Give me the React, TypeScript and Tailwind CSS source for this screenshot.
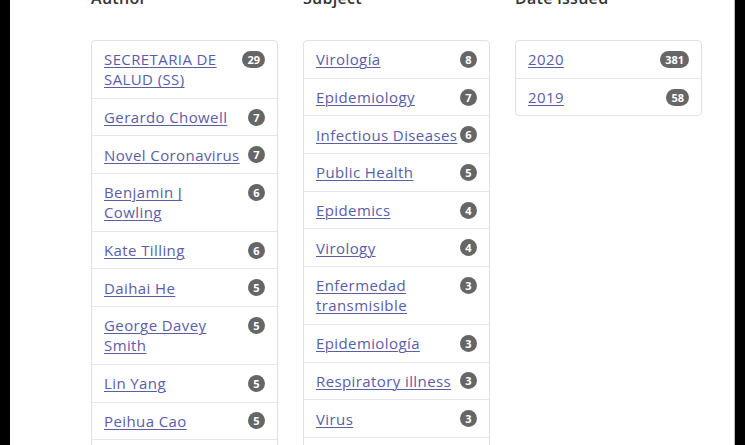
type Facet = { label: string; count: number }

// Montserrat (used on the original site) wraps this name; Open Sans is narrower, so break it by hand
const authors: Facet[] = [
  { label: 'SECRETARIA DE SALUD (SS)', count: 29 },
  { label: 'Gerardo Chowell', count: 7 },
  { label: 'Novel Coronavirus', count: 7 },
  { label: 'Benjamin J\nCowling', count: 6 },
  { label: 'Kate Tilling', count: 6 },
  { label: 'Daihai He', count: 5 },
  { label: 'George Davey Smith', count: 5 },
  { label: 'Lin Yang', count: 5 },
  { label: 'Peihua Cao', count: 5 },
  { label: 'Jinjun Ran', count: 4 },
]

const subjects: Facet[] = [
  { label: 'Virología', count: 8 },
  { label: 'Epidemiology', count: 7 },
  { label: 'Infectious Diseases', count: 6 },
  { label: 'Public Health', count: 5 },
  { label: 'Epidemics', count: 4 },
  { label: 'Virology', count: 4 },
  { label: 'Enfermedad transmisible', count: 3 },
  { label: 'Epidemiología', count: 3 },
  { label: 'Respiratory illness', count: 3 },
  { label: 'Virus', count: 3 },
  { label: 'Coronavirus', count: 3 },
]

const dates: Facet[] = [
  { label: '2020', count: 381 },
  { label: '2019', count: 58 },
]

function FacetBox({ title, items }: { title: string; items: Facet[] }) {
  return (
    <div className="flex flex-col">
      <h2 className="text-[16px] leading-6 font-semibold text-[#333] tracking-[0.3px]">{title}</h2>
      <ul className="mt-[30px] border border-[#e2e2e2] rounded-[4px] bg-white">
        {items.map((item, i) => (
          <li
            key={item.label}
            className={
              'flex items-start justify-between pl-3 pr-[12px] py-[8.35px] ' +
              (i > 0 ? 'border-t border-[#e6e6e6]' : '')
            }
          >
            <a
              href="#"
              className="whitespace-pre-line text-[15px] leading-5 tracking-[0.4px] text-[#5a5da8] underline decoration-1 underline-offset-2 pr-[2px]"
            >
              {item.label}
            </a>
            <span className="mt-[1.5px] shrink-0 rounded-full bg-[#666] text-white text-[11px] leading-none font-bold px-[5px] py-[3px] min-w-[17px] text-center">
              {item.count}
            </span>
          </li>
        ))}
      </ul>
    </div>
  )
}

export default function App() {
  return (
    <div
      className="h-[445px] w-[745px] bg-black flex overflow-hidden"
      style={{ fontFamily: '"Open Sans", "Noto Sans", sans-serif' }}
    >
      <div className="ml-[10px] w-[725px] h-full bg-white overflow-hidden border-r border-[#bbb]">
        <div className="mt-[-14px] pl-[81px] grid grid-cols-[187px_187px_187px] gap-x-[25px] items-start">
          <FacetBox title="Author" items={authors} />
          <FacetBox title="Subject" items={subjects} />
          <FacetBox title="Date issued" items={dates} />
        </div>
      </div>
    </div>
  )
}
